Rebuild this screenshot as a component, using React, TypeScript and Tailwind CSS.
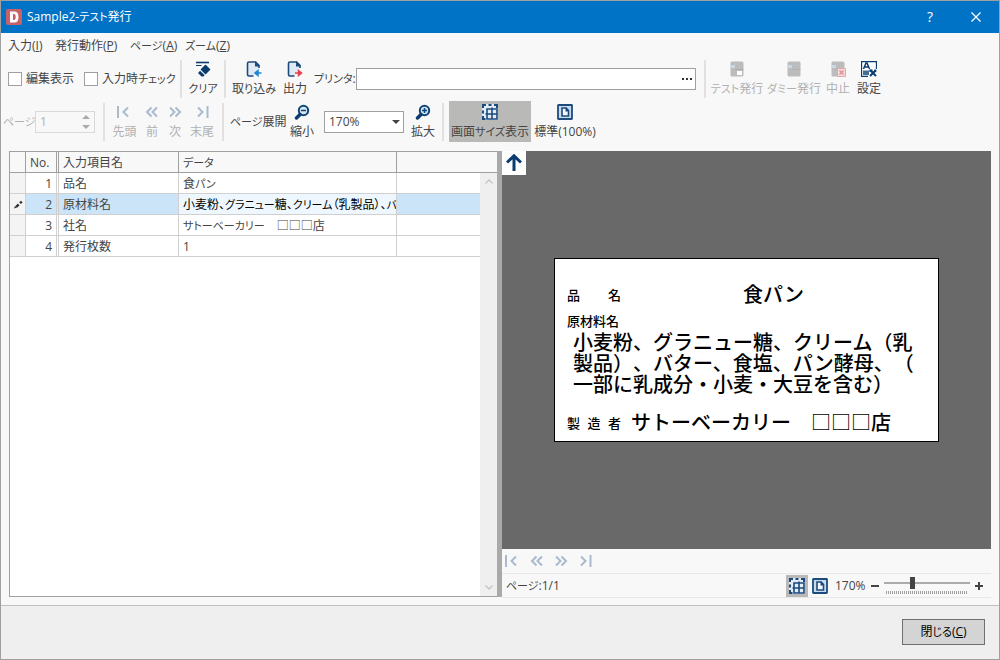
import type { ReactNode } from 'react';
import clsx from 'clsx';

const menus = [
  { label: '入力', accel: 'I', width: 'w-[47px]' },
  { label: '発行動作', accel: 'P', width: 'w-[75px]' },
  { label: 'ページ', accel: 'A', width: 'w-[55px]' },
  { label: 'ズーム', accel: 'Z', width: 'w-[50px]' },
];

const rows = [
  { no: 1, name: '品名', data: '食パン' },
  { no: 2, name: '原材料名', data: '小麦粉、グラニュー糖、クリーム（乳製品）、バター' },
  { no: 3, name: '社名', data: 'サトーベーカリー　□□□店' },
  { no: 4, name: '発行枚数', data: '1' },
];

const activeRow = 2;

// UI text sets kana one step smaller than kanji
function UiText({ text }: { text: string }) {
  return (
    <>
      {text.split(/([\u3041-\u30ff]+)/).map((part, i) =>
        i % 2 ? (
          <span key={i} className="text-[11px]">
            {part}
          </span>
        ) : (
          part
        ),
      )}
    </>
  );
}

function Icon({ children, className = 'h-4 w-4' }: { children: ReactNode; className?: string }) {
  return (
    <svg viewBox="0 0 16 16" className={clsx('shrink-0', className)} fill="none" aria-hidden="true">
      {children}
    </svg>
  );
}

function ClearIcon() {
  return (
    <Icon>
      <path d="M1 1.5h13" stroke="#0b3c6f" strokeWidth="1.6" />
      <path d="M1 4.500h5.500" stroke="#0b3c6f" />
      <path d="M10.500 4.500l4 4-4 4-4-4z" fill="#0b3c6f" stroke="#0b3c6f" strokeWidth="1.5" strokeLinejoin="round" />
      <path d="M5 9.800l4.500 4.200-.8 1.500H6.500L3.500 12.500v-1z" fill="#0b3c6f" />
    </Icon>
  );
}

function DocArrowIcon({ direction }: { direction: 'in' | 'out' }) {
  return (
    <Icon>
      <path d="M13 7V4.5L9.5 1H3Q1.5 1 1.5 2.500v11Q1.500 15 3 15h4.500" fill="#dfeaf5" stroke="#1c4a7d" strokeWidth="1.6" />
      <path d="M9 0.500h1L13.500 4v1.500H9z" fill="#1c4a7d" />
      {direction === 'in' ? (
        <path d="M15.500 12H9.500M12 9.500l-3 2.500 3 2.500z" fill="#1b86d2" stroke="#1b86d2" strokeWidth="1.500" />
      ) : (
        <path d="M8 12h6M11.500 9.500l3 2.500-3 2.500z" fill="#e8404c" stroke="#e8404c" strokeWidth="1.500" />
      )}
    </Icon>
  );
}

function PrintIcon({ kind }: { kind: 'test' | 'dummy' | 'stop' }) {
  return (
    <Icon>
      <path d="M3 .500h10q1.500 0 1.500 1.500v12q0 1.500-1.500 1.500H3q-1.500 0-1.500-1.500V2Q1.500.500 3 .500z" fill="#bcbcbc" />
      <path d="M1.500 4h4.500v3H1.500z" fill="#c9d9e8" />
      <path d="M6 8.500h8.500" stroke="#b0b0b0" />
      {kind === 'test' && <path d="M8 10h5v4H8z" fill="#fff" />}
      {kind === 'stop' && (
        <>
          <path d="M7.500 7.500h8v8h-8z" fill="#f5dada" stroke="#e3a9a9" />
          <path d="M9.500 9.500l4 4m0-4l-4 4" stroke="#dd8f8f" strokeWidth="1.300" />
        </>
      )}
    </Icon>
  );
}

function SettingsIcon() {
  return (
    <Icon>
      <path d="M15.500 8V.500H.500v15H7" fill="#fff" stroke="#0b3c6f" strokeWidth="1.300" />
      <path d="M2.500 8L5 2h1l2.500 6M3.500 6h4" stroke="#0b3c6f" strokeWidth="1.500" />
      <path d="M3 9.500V14M5 9.500V14M7 9.500V14" stroke="#0b3c6f" strokeWidth="1.500" />
      <path d="M9 9l6 6m0-6l-6 6" stroke="#0b3c6f" strokeWidth="2" />
      <path d="M8.500 8.500h3v2.500h-3zM13.500 8l2 2.500-2 1z" fill="#0b3c6f" />
    </Icon>
  );
}

function ZoomIcon({ plus = false }: { plus?: boolean }) {
  return (
    <Icon>
      <circle cx="9.500" cy="6.500" r="4.700" fill="#d9e7f4" stroke="#0f4478" strokeWidth="2" />
      <path d="M6 10.500l-3.500 3.500" stroke="#0b3c6f" strokeWidth="3.400" strokeLinecap="round" />
      <path d={plus ? 'M7 6.500h5M9.500 4v5' : 'M7 6.500h5'} stroke="#0f4478" strokeWidth="1.500" />
    </Icon>
  );
}

function FitIcon() {
  return (
    <Icon>
      <path d="M0 0h16v16H0z" fill="#e4edf6" />
      <path d="M1 4V1h3M6.500 1h3M12 1h3v3M1 6.500v3M1 12v3h2.500" stroke="#1c4a7d" strokeWidth="2" />
      <path d="M5 5h10v10H5zM10 3.500V15M3.500 10H15" stroke="#1c4a7d" strokeWidth="1.600" />
    </Icon>
  );
}

function ActualIcon() {
  return (
    <Icon>
      <rect x="1" y="1" width="14" height="14" rx=".5" fill="#c9dcee" stroke="#1c4a7d" strokeWidth="1.800" />
      <path d="M5 4h4l2.500 2.500V12H5z" fill="#f4f8fc" stroke="#1c4a7d" strokeWidth="1.600" />
      <path d="M8.500 3.500h1l2.500 3v1H8.500z" fill="#1c4a7d" />
    </Icon>
  );
}

const navPaths = {
  first: 'M1 2v12M11 3.500L6.500 8l4.500 4.500',
  prev: 'M7.500 3.500L3 8l4.500 4.500M13 3.500L8.500 8l4.500 4.500',
  next: 'M3 3.500L7.500 8 3 12.500M8.500 3.500L13 8l-4.500 4.500',
  last: 'M13.500 2v12M4 3.500L8.500 8 4 12.500',
};

function NavIcon({ kind }: { kind: keyof typeof navPaths }) {
  return (
    <Icon>
      <path d={navPaths[kind]} stroke="#a9bace" strokeWidth="2" />
    </Icon>
  );
}

function Separator({ className }: { className?: string }) {
  return <div className={clsx('h-[38px] w-0.5 shrink-0 bg-[#e1e1e1]', className)} />;
}

interface ToolButtonProps {
  icon: ReactNode;
  label: string;
  width: string;
  disabled?: boolean;
  pressed?: boolean;
}

function ToolButton({ icon, label, width, disabled, pressed }: ToolButtonProps) {
  return (
    <button
      type="button"
      disabled={disabled}
      aria-pressed={pressed}
      className={clsx(
        'flex h-[41px] shrink-0 flex-col items-center gap-[3px] whitespace-nowrap pt-[3px] disabled:text-[#b1b1b1]',
        width,
        pressed && 'bg-[#b9b9b7]',
      )}
    >
      {icon}
      <span className="leading-[18px]">
        <UiText text={label} />
      </span>
    </button>
  );
}

function TitleBar() {
  return (
    <header className="flex h-8 items-center bg-[#0173c7] pl-[5px] text-white">
      <svg viewBox="0 0 16 16" className="h-4 w-4" aria-hidden="true">
        <rect width="16" height="16" rx="2" fill="#c9606a" />
        <path d="M4 2.500h4.500q4 0 4 5.500t-4 5.500H4zM7 5v6h1q1.700 0 1.700-3T8 5z" fill="#fff" fillRule="evenodd" />
      </svg>
      <h1 className="ml-[5px] flex-1">
        <UiText text="Sample2-テスト発行" />
      </h1>
      <button type="button" aria-label="ヘルプ" className="w-[46px] text-sm">
        ?
      </button>
      <button type="button" aria-label="ウィンドウを閉じる" className="flex w-[46px] justify-center">
        <svg viewBox="0 0 10 10" className="h-2.5 w-2.5" aria-hidden="true">
          <path d="M.5.5l9 9m0-9l-9 9" stroke="#fff" strokeWidth="1.300" />
        </svg>
      </button>
    </header>
  );
}

function CheckField({ label, width }: { label: string; width: string }) {
  return (
    <label className={clsx('flex shrink-0 items-center gap-1 whitespace-nowrap', width)}>
      <input type="checkbox" className="h-3.5 w-3.5 shrink-0 appearance-none border border-[#a0a0a0] bg-white" />
      <span>
        <UiText text={label} />
      </span>
    </label>
  );
}

function PrinterToolbar() {
  return (
    <div className="mb-0.5 flex h-[41px] items-center pl-[7px]">
      <CheckField label="編集表示" width="w-[76px]" />
      <CheckField label="入力時チェック" width="w-24" />
      <Separator />
      <ToolButton icon={<ClearIcon />} label="クリア" width="w-[42px]" />
      <Separator />
      <ToolButton icon={<DocArrowIcon direction="in" />} label="取り込み" width="w-14" />
      <ToolButton icon={<DocArrowIcon direction="out" />} label="出力" width="w-[26px]" />
      <label htmlFor="printer" className="ml-1.5 w-[42px] shrink-0 whitespace-nowrap">
        <UiText text="プリンタ:" />
      </label>
      <div className="flex h-[22px] w-[340px] shrink-0 border border-[#a0a0a0] bg-white">
        <input id="printer" type="text" className="min-w-0 flex-1 px-1 outline-none" />
        <button type="button" aria-label="プリンタを選択" className="flex w-4 items-center justify-center gap-0.5">
          <span className="h-0.5 w-0.5 bg-[#333]" />
          <span className="h-0.5 w-0.5 bg-[#333]" />
          <span className="h-0.5 w-0.5 bg-[#333]" />
        </button>
      </div>
      <Separator className="ml-2" />
      <ToolButton icon={<PrintIcon kind="test" />} label="テスト発行" width="w-[62px]" disabled />
      <ToolButton icon={<PrintIcon kind="dummy" />} label="ダミー発行" width="w-[52px]" disabled />
      <ToolButton icon={<PrintIcon kind="stop" />} label="中止" width="w-9" disabled />
      <ToolButton icon={<SettingsIcon />} label="設定" width="w-[26px]" />
    </div>
  );
}

function PageToolbar() {
  return (
    <div className="flex h-[41px] items-center pl-0.5">
      <label htmlFor="page" className="w-8 shrink-0 whitespace-nowrap text-[#b1b1b1]">
        <UiText text="ページ" />
      </label>
      <div className="flex h-[22px] w-[60px] shrink-0 border border-[#d9d9d9] text-[#b1b1b1]">
        <input id="page" type="text" defaultValue="1" disabled className="min-w-0 flex-1 px-1" />
        <div className="flex w-4 flex-col items-center justify-center gap-1.5">
          <button type="button" disabled aria-label="ページを増やす">
            <svg viewBox="0 0 8 4" className="block h-1 w-2"><path d="M0 4l4-4 4 4z" fill="#ababab" /></svg>
          </button>
          <button type="button" disabled aria-label="ページを減らす">
            <svg viewBox="0 0 8 4" className="block h-1 w-2"><path d="M0 0l4 4 4-4z" fill="#ababab" /></svg>
          </button>
        </div>
      </div>
      <Separator className="ml-2" />
      <ToolButton icon={<NavIcon kind="first" />} label="先頭" width="w-[39px]" disabled />
      <ToolButton icon={<NavIcon kind="prev" />} label="前" width="w-4" disabled />
      <ToolButton icon={<NavIcon kind="next" />} label="次" width="w-[30px]" disabled />
      <ToolButton icon={<NavIcon kind="last" />} label="末尾" width="w-6" disabled />
      <Separator className="ml-2" />
      <button type="button" className="ml-1.5 w-14 shrink-0 whitespace-nowrap text-left">
        <UiText text="ページ展開" />
      </button>
      <ToolButton icon={<ZoomIcon />} label="縮小" width="w-8" />
      <div className="relative ml-1.5 w-20 shrink-0">
        <select aria-label="倍率" className="block h-[22px] w-full appearance-none border border-[#a0a0a0] bg-white px-1">
          <option>170%</option>
        </select>
        <svg viewBox="0 0 8 4" className="pointer-events-none absolute right-1 top-[9px] h-1 w-2">
          <path d="M0 0l4 4 4-4z" fill="#444" />
        </svg>
      </div>
      <ToolButton icon={<ZoomIcon plus />} label="拡大" width="w-[38px]" />
      <Separator />
      <div className="ml-[5px] flex">
        <ToolButton icon={<FitIcon />} label="画面サイズ表示" width="w-[82px]" pressed />
        <ToolButton icon={<ActualIcon />} label="標準(100%)" width="w-[68px]" />
      </div>
    </div>
  );
}

function InputTable() {
  return (
    <div className="relative w-[488px] shrink-0 border border-r-0 border-[#a0a0a0] bg-white">
      <table className="w-full table-fixed border-separate border-spacing-0">
        <colgroup>
          <col className="w-4" />
          <col className="w-[33px]" />
          <col className="w-[120px]" />
          <col className="w-[218px]" />
          <col />
        </colgroup>
        <thead className="text-left">
          <tr className="h-[21px] bg-[#f8f8f8] [&>th]:border-b [&>th]:border-[#a0a0a0] [&>th]:pb-0 [&>th]:pt-0.5 [&>th]:font-normal [&>th]:leading-[18px]">
            <th className="border-r" />
            <th className="border-r-3 border-double pl-1">No.</th>
            <th className="border-r px-1">入力項目名</th>
            <th className="border-r px-1">
              <UiText text="データ" />
            </th>
            <th />
          </tr>
        </thead>
        <tbody>
          {rows.map((row) => {
            const active = row.no === activeRow;
            return (
              <tr
                key={row.no}
                className={clsx(
                  'h-[21px] [&>td]:border-b [&>td]:border-[#d0d0d0] [&>td]:pb-0 [&>td]:pt-0.5 [&>td]:leading-[18px]',
                  active && 'bg-[#cce4f7]',
                )}
              >
                <td className="border-r bg-[#f4f4f4]">
                  {active && (
                    <svg viewBox="0 0 10 10" className="mx-auto h-2.5 w-2.5" aria-hidden="true">
                      <path d="M1 8.500l1-2.500 2 1.500z" fill="#333" />
                      <path d="M3.200 6.800l2.500-2.300M7 3.200l1.800-1.600" stroke="#333" strokeWidth="2.400" />
                    </svg>
                  )}
                </td>
                <td className="border-r-3 border-double pr-1 text-right">{row.no}</td>
                <td className="border-r px-1">{row.name}</td>
                <td
                  className={clsx(
                    'overflow-hidden whitespace-nowrap border-r pl-1',
                    active && 'bg-[#eff7fe] text-black',
                  )}
                >
                  <UiText text={row.data} />
                </td>
                <td />
              </tr>
            );
          })}
        </tbody>
      </table>
      <div className="absolute bottom-0 right-0 top-[21px] flex w-[17px] flex-col items-center justify-between bg-[#efefef] py-1.5">
        <svg viewBox="0 0 8 5" className="h-[5px] w-2"><path d="M.5 4.500L4 1l3.500 3.500" fill="none" stroke="#c4c4c4" strokeWidth="1.300" /></svg>
        <svg viewBox="0 0 8 5" className="h-[5px] w-2"><path d="M.5.5L4 4 7.500.5" fill="none" stroke="#c4c4c4" strokeWidth="1.300" /></svg>
      </div>
    </div>
  );
}

function LabelPreview() {
  return (
    <div className="h-[184px] w-[385px] border border-black bg-white pl-3 font-medium text-black [font-feature-settings:normal] [text-spacing-trim:space-all]">
      <div className="flex items-center pt-[25px] text-[20px] leading-[22px]">
        <div className="flex w-[54px] justify-between text-[13px]">
          <span>品</span>
          <span>名</span>
        </div>
        <div className="ml-[122px]">食パン</div>
      </div>
      <div className="mt-[5px] text-[13px] leading-5">原材料名</div>
      <p className="ml-1.5 mt-px whitespace-nowrap text-[20px] leading-[21px]">
        小麦粉、グラニュー糖、クリーム（乳
        <br />
        製品）、バター、食塩、パン酵母、（
        <br />
        一部に乳成分・小麦・大豆を含む）
      </p>
      <div className="mt-[17px] flex items-center whitespace-nowrap text-[20px] leading-[22px]">
        <div className="flex w-[54px] justify-between text-[13px]">
          <span>製</span>
          <span>造</span>
          <span>者</span>
        </div>
        <div className="ml-2.5">サトーベーカリー　□□□店</div>
      </div>
    </div>
  );
}

function PreviewPane() {
  return (
    <section className="-mb-px flex min-w-0 flex-1 flex-col">
      <div className="relative flex flex-1 items-center justify-center bg-[#696969]">
        <button
          type="button"
          aria-label="先頭へ戻る"
          className="absolute left-0 top-0 flex h-6 w-6 items-center justify-center bg-white"
        >
          <svg viewBox="0 0 16 18" className="h-[18px] w-4" fill="none" aria-hidden="true">
            <path d="M8 17V2M1 8.500L8 1.800l7 6.700" stroke="#0b3c6f" strokeWidth="3" />
          </svg>
        </button>
        <LabelPreview />
      </div>
      <div className="flex h-[25px] items-center border-b border-[#e8e8e8] pl-[3px]">
        <button type="button" disabled aria-label="先頭ページ" className="w-6"><NavIcon kind="first" /></button>
        <button type="button" disabled aria-label="前のページ" className="w-6"><NavIcon kind="prev" /></button>
        <button type="button" disabled aria-label="次のページ" className="w-6"><NavIcon kind="next" /></button>
        <button type="button" disabled aria-label="最終ページ" className="w-6"><NavIcon kind="last" /></button>
      </div>
      <div className="flex h-6 items-center border-b border-[#e8e8e8] pl-1 pr-2">
        <span className="flex-1">
          <UiText text="ページ:1/1" />
        </span>
        <button type="button" aria-label="画面サイズ表示" aria-pressed className="flex h-[22px] w-[22px] items-center justify-center bg-[#b9b9b7]">
          <FitIcon />
        </button>
        <button type="button" aria-label="標準(100%)" className="ml-1 flex w-4 items-center">
          <ActualIcon />
        </button>
        <label htmlFor="zoom" className="ml-[7px] w-9">170%</label>
        <button type="button" aria-label="縮小" className="flex h-4 w-2 items-center">
          <span className="h-0.5 w-2 bg-[#444]" />
        </button>
        <div className="mx-[5px] w-[86px]">
          <input
            id="zoom"
            type="range"
            min={0}
            max={100}
            defaultValue={32}
            className="block h-3 w-full appearance-none bg-[linear-gradient(#ababab,#ababab)] bg-[length:100%_2px] bg-center bg-no-repeat [&::-webkit-slider-thumb]:h-3 [&::-webkit-slider-thumb]:w-[5px] [&::-webkit-slider-thumb]:appearance-none [&::-webkit-slider-thumb]:bg-[#444]"
          />
          <div className="mx-0.5 mt-0.5 h-[3px] bg-[repeating-linear-gradient(90deg,#a0a0a0_0_1px,transparent_1px_2px)]" />
        </div>
        <button type="button" aria-label="拡大">
          <svg viewBox="0 0 8 8" className="h-2 w-2"><path d="M4 0v8M0 4h8" stroke="#444" strokeWidth="2" /></svg>
        </button>
      </div>
    </section>
  );
}

export default function App() {
  return (
    <div className="flex min-h-screen flex-col border border-[#a0a0a0] bg-[#f8f8f8] font-['Open_Sans','Noto_Sans_CJK_JP',sans-serif] text-xs text-[#444] [font-feature-settings:'palt']">
      <TitleBar />
      <nav className="flex h-[25px] items-center pl-[7px]">
        {menus.map((menu) => (
          <button key={menu.accel} type="button" className={clsx('whitespace-nowrap text-left', menu.width)}>
            <UiText text={menu.label} />(<u>{menu.accel}</u>)
          </button>
        ))}
      </nav>
      <PrinterToolbar />
      <PageToolbar />
      <main className="flex flex-1 px-2 pb-2 pt-[9px]">
        <InputTable />
        <div className="w-[5px] shrink-0 bg-[#a9a9a9]" />
        <PreviewPane />
      </main>
      <footer className="flex justify-end border-t border-[#c0c0c0] bg-[#efefef] px-3.5 pb-3.5 pt-[13px]">
        <button type="button" className="h-[26px] w-[83px] border border-[#707070] bg-[#d4d4d4] text-black">
          <UiText text="閉じる" />(<u>C</u>)
        </button>
      </footer>
    </div>
  );
}
